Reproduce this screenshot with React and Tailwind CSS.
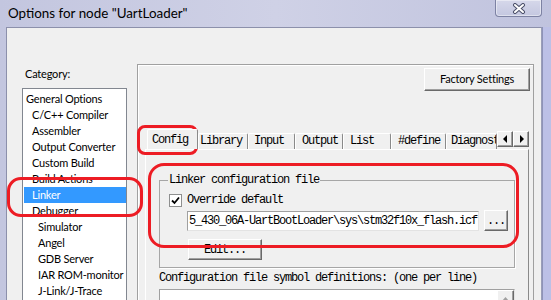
import React from "react";

const sans = "font-['Lato','Liberation_Sans',sans-serif]";
const mono = "font-['Liberation_Mono',monospace] text-[12px] leading-[14px] tracking-[-1.2px] text-black";
const raised =
  "border border-t-white border-l-white border-r-[#696969] border-b-[#696969] shadow-[inset_-1px_-1px_0_#a0a0a0] bg-[#f0f0f0]";

const categories = [
  { label: "General Options", pl: "pl-[2px]" },
  { label: "C/C++ Compiler", pl: "pl-[8px]" },
  { label: "Assembler", pl: "pl-[8px]" },
  { label: "Output Converter", pl: "pl-[8px]" },
  { label: "Custom Build", pl: "pl-[8px]" },
  { label: "Build Actions", pl: "pl-[8px]" },
  { label: "Linker", pl: "pl-[8px]", selected: true },
  { label: "Debugger", pl: "pl-[8px]" },
  { label: "Simulator", pl: "pl-[14px]" },
  { label: "Angel", pl: "pl-[14px]" },
  { label: "GDB Server", pl: "pl-[14px]" },
  { label: "IAR ROM-monitor", pl: "pl-[14px]" },
  { label: "J-Link/J-Trace", pl: "pl-[14px]" },
];

const tabs = [
  { label: "Library", cls: "w-[50px] pl-[1px]" },
  { label: "Input", cls: "w-[47px] pl-[5px]" },
  { label: "Output", cls: "w-[48px] pl-[6px]" },
  { label: "List", cls: "w-[48px] pl-[6px]" },
  { label: "#define", cls: "w-[55px] pl-[6px]" },
  { label: "Diagnost", cls: "w-[51px] pl-[4px]" },
];

function CloseButton() {
  return (
    <div className="mr-[9px] flex h-[17px] w-[47px] items-center justify-center self-start rounded-b-[4px] border border-t-0 border-[#7d82a3] bg-gradient-to-b from-[#d6d8ea] to-[#c4c7e0] shadow-[inset_0_0_0_1px_rgba(255,255,255,0.45)]">
      <svg width="14" height="11" viewBox="0 0 14 11">
        <path d="M3 2 L11 9 M11 2 L3 9" stroke="#4a4e68" strokeWidth="4" strokeLinecap="round" />
        <path d="M3 2 L11 9 M11 2 L3 9" stroke="#ffffff" strokeWidth="2" strokeLinecap="round" />
      </svg>
    </div>
  );
}

function Tab({ label, cls }) {
  return (
    <div
      className={`h-[16px] shrink-0 overflow-hidden whitespace-nowrap rounded-t-[2px] border-l border-t border-r border-l-white border-t-white border-r-[#8a8a8a] bg-[#f0f0f0] ${cls} ${mono}`}
    >
      {label}
    </div>
  );
}

function ArrowButton({ dir }) {
  return (
    <div className={`flex h-[16px] w-[16px] items-center justify-center ${raised}`}>
      <svg width="5" height="8" viewBox="0 0 5 8">
        {dir === "left" ? <path d="M4 0 L0 4 L4 8 Z" fill="#000" /> : <path d="M1 0 L5 4 L1 8 Z" fill="#000" />}
      </svg>
    </div>
  );
}

export default function App() {
  return (
    <div className="relative h-[300px] w-[551px] overflow-hidden bg-gradient-to-r from-[#c3c6df] via-[#cfd1e6] to-[#c0c3de]">
      {/* title bar */}
      <div className="flex h-[27px] items-center">
        <span className={`pl-[8px] text-[13.4px] text-black ${sans}`}>Options for node "UartLoader"</span>
        <div className="ml-auto self-start">
          <CloseButton />
        </div>
      </div>

      <div className="flex h-[273px]">
        <div className="w-[6px] shrink-0" />

        {/* client */}
        <div className="flex w-[536px] shrink-0 items-start border-l border-t border-r border-l-[#8c90ab] border-t-[#8c90ab] border-r-[#9a9eb8] bg-[#f0f0f0] pl-[15px]">
          {/* category column */}
          <div className="flex w-[105px] shrink-0 flex-col pt-[38px]">
            <div className={`ml-[3px] h-[16px] text-[11px] leading-[16px] tracking-[-0.2px] text-black ${sans}`}>Category:</div>
            <div className="mt-[6px] h-[240px] border border-[#828790] bg-white pt-[2px]">
              {categories.map((c) => (
                <div
                  key={c.label}
                  className={`ml-[1px] flex h-[16px] items-center whitespace-nowrap text-[11px] tracking-[-0.2px] ${sans} ${c.pl} ${
                    c.selected ? "bg-[#3399ff] text-white" : "text-black"
                  }`}
                >
                  {c.label}
                </div>
              ))}
            </div>
          </div>

          {/* right frame */}
          <div className="ml-[10px] mt-[36px] flex h-[260px] w-[397px] shrink-0 flex-col border border-b-0 border-[#a0a0a0] shadow-[inset_1px_1px_0_white]">
            <div className="flex justify-end pr-[3px] pt-[3px]">
              <div className={`flex h-[23px] w-[106px] items-center justify-center text-[11px] tracking-[-0.2px] text-black ${sans} ${raised}`}>
                Factory Settings
              </div>
            </div>

            {/* tab strip */}
            <div className="ml-[9px] mt-[38px] flex h-[20px] w-[382px] items-end">
              <div className="flex w-[350px] items-end overflow-hidden">
                <div
                  className={`relative z-10 -mb-[3px] h-[23px] w-[51px] shrink-0 rounded-t-[2px] border-l border-t border-r border-l-white border-t-white border-r-[#8a8a8a] bg-[#f0f0f0] pl-[4px] pt-[3px] ${mono}`}
                >
                  Config
                </div>
                {tabs.map((t) => (
                  <Tab key={t.label} {...t} />
                ))}
              </div>
              <div className="mb-[2px] flex">
                <ArrowButton dir="left" />
                <ArrowButton dir="right" />
              </div>
            </div>

            {/* tab page */}
            <div className="ml-[7px] flex w-[384px] flex-1 flex-col border-l border-t border-r border-l-white border-t-white border-r-[#8a8a8a] px-[13px]">
              <fieldset className="mt-[23px] border border-[#a6a6a6] pb-[7px] shadow-[1px_1px_0_white]">
                <legend className={`ml-[8px] px-[1px] ${mono}`}>Linker configuration file</legend>
                <div className="ml-[9px] mt-[6px] flex items-center gap-[5px]">
                  <div className="flex h-[13px] w-[13px] items-center justify-center border border-[#8e8f8f] bg-white">
                    <svg width="9" height="9" viewBox="0 0 9 9">
                      <path d="M1 4.5 L3.5 7 L8 1.5" fill="none" stroke="#000" strokeWidth="1.8" />
                    </svg>
                  </div>
                  <span className={mono}>Override default</span>
                </div>
                <div className="ml-[27px] mt-[3px] flex items-start gap-[5px]">
                  <div
                    className={`mt-[1px] flex h-[20px] w-[292px] items-center overflow-hidden whitespace-nowrap border border-t-[#a0a0a0] border-l-[#a0a0a0] border-b-[#e3e3e3] border-r-[#e3e3e3] bg-white pl-[1px] ${mono}`}
                  >
                    5_430_06A-UartBootLoader\sys\stm32f10x_flash.icf
                  </div>
                  <div className={`flex h-[21px] w-[24px] items-center justify-center ${mono} ${raised}`}>...</div>
                </div>
                <div className={`ml-[28px] mt-[8px] flex h-[21px] w-[74px] items-center justify-center ${mono} ${raised}`}>
                  Edit...
                </div>
              </fieldset>

              <div className={`mt-[3px] whitespace-nowrap ${mono}`}>
                Configuration file symbol definitions: (one per line)
              </div>
              <div className="mt-[4px] flex h-[40px] border border-t-[#a0a0a0] border-l-[#a0a0a0] border-b-[#e3e3e3] border-r-[#e3e3e3] bg-white">
                <div className="flex-1" />
                <div className="w-[17px] bg-[#f0f0f0]">
                  <div className={`flex h-[17px] w-[17px] items-center justify-center ${raised}`}>
                    <svg width="7" height="4" viewBox="0 0 7 4">
                      <path d="M0 4 L3.5 0 L7 4 Z" fill="#a0a0a0" />
                    </svg>
                  </div>
                </div>
              </div>
            </div>
          </div>
        </div>

        <div className="w-[9px] shrink-0 border-l border-l-[#8e93b8] bg-[#bcc0e6]" />
      </div>

      {/* red annotations */}
      <div className="absolute left-[137px] top-[125px] h-[30px] w-[61px] rounded-[8px] border-[3px] border-[#ed1c24]" />
      <div className="absolute left-[7px] top-[177px] h-[40px] w-[136px] rounded-[14px] border-[3px] border-[#ed1c24]" />
      <div className="absolute left-[148px] top-[163px] h-[85px] w-[371px] rounded-[16px] border-[3px] border-[#ed1c24]" />
    </div>
  );
}
